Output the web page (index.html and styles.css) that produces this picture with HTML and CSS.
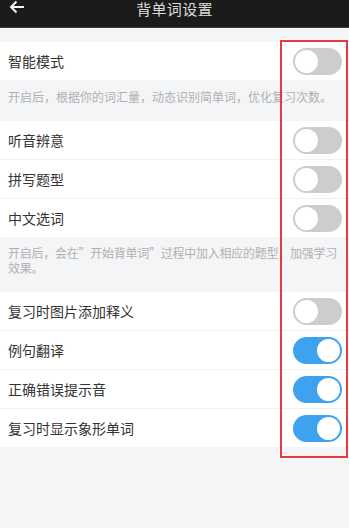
FILE: index.html
```html
<!DOCTYPE html>
<html lang="zh-CN">
<head>
<meta charset="utf-8">
<link rel="stylesheet" href="styles.css">
</head>
<body>
<div class="page">
  <header class="topbar">
    <svg class="back" width="16" height="14" viewBox="0 0 16 14"><path d="M15 7H2M7.5 1.5L2 7l5.5 5.5" fill="none" stroke="#f2f2f2" stroke-width="2"/></svg>
    <div class="title">背单词设置</div>
  </header>
  <div class="gap"></div>
  <div class="group">
    <div class="row"><span class="label">智能模式</span><span class="toggle"></span></div>
  </div>
  <div class="desc">开启后，根据你的词汇量，动态识别简单词，优化复习次数。</div>
  <div class="group">
    <div class="row"><span class="label">听音辨意</span><span class="toggle"></span></div>
    <div class="row"><span class="label">拼写题型</span><span class="toggle"></span></div>
    <div class="row"><span class="label">中文选词</span><span class="toggle"></span></div>
  </div>
  <div class="desc desc2">开启后，会在”开始背单词”过程中加入相应的题型，加强学习效果。</div>
  <div class="group">
    <div class="row"><span class="label">复习时图片添加释义</span><span class="toggle"></span></div>
    <div class="row"><span class="label">例句翻译</span><span class="toggle on"></span></div>
    <div class="row"><span class="label">正确错误提示音</span><span class="toggle on"></span></div>
    <div class="row"><span class="label">复习时显示象形单词</span><span class="toggle on"></span></div>
  </div>
  <div class="highlight"></div>
</div>
</body>
</html>
```
FILE: styles.css
```css
html, body {
  margin: 0;
  padding: 0;
  background: #f4f5f7;
}
body {
  font-family: "Noto Sans CJK SC", "Noto Sans", sans-serif;
}
.page {
  position: relative;
  width: 349px;
  height: 528px;
  overflow: hidden;
  background: #f4f5f7;
}
.topbar {
  height: 28px;
  background: #1b1b1b;
  display: flex;
  align-items: flex-start;
  justify-content: center;
  position: relative;
  border-bottom: 1px solid #3a3a3a;
  box-sizing: border-box;
}
.back {
  position: absolute;
  left: 9px;
  top: 0px;
}
.title {
  color: #dcdcdc;
  font-size: 15px;
  line-height: 16px;
  margin-top: 1px;
  letter-spacing: 0.3px;
}
.gap {
  height: 14px;
}
.group {
  background: #fff;
}
.row {
  height: 39px;
  display: flex;
  align-items: center;
  justify-content: space-between;
  padding: 0 7px 0 8px;
  border-top: 1px solid #f0f0f0;
  box-sizing: border-box;
}
.group .row:first-child {
  border-top: none;
  height: 38px;
}
.label {
  font-size: 14px;
  color: #333;
}
.toggle {
  width: 49px;
  height: 27px;
  border-radius: 14px;
  background: #cdcdcd;
  position: relative;
  box-sizing: border-box;
}
.toggle::after {
  content: "";
  position: absolute;
  left: 2px;
  top: 2px;
  width: 23px;
  height: 23px;
  border-radius: 50%;
  background: #fff;
}
.toggle.on {
  background: #3ea2ef;
}
.toggle.on::after {
  left: auto;
  right: 2px;
}
.desc {
  font-size: 12px;
  line-height: 15px;
  color: #b0b0b0;
  padding: 9px 8px 17px 8px;
}
.desc2 {
  padding: 8px 4px 17px 8px;
  letter-spacing: -0.25px;
}
.highlight {
  position: absolute;
  left: 280px;
  top: 40px;
  width: 68px;
  height: 418px;
  border: 2.5px solid #e53a3e;
  box-sizing: border-box;
}
```
